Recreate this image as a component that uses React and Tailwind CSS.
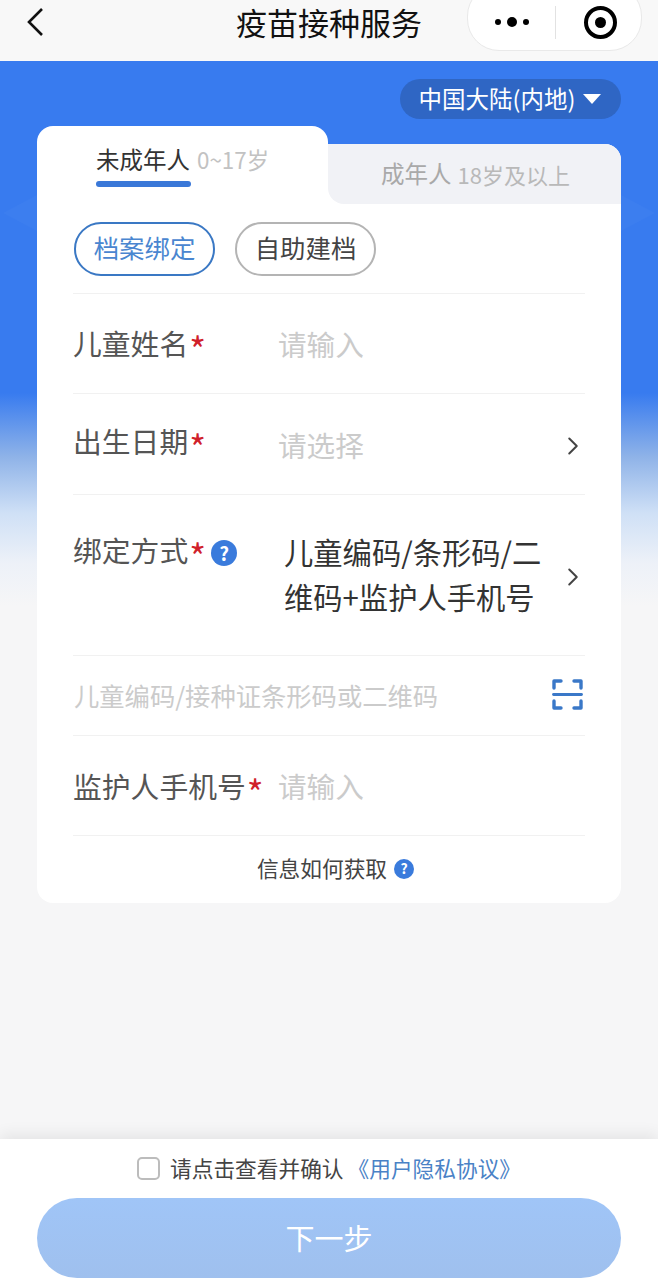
import { ChevronRight } from "lucide-react";

const FONT = "[font-family:'Noto_Sans_CJK_SC','Noto_Sans',sans-serif]";

function Help({ className }) {
    return (
        <span className={`flex items-center justify-center rounded-full bg-[#3a7bdc] font-bold text-white ${className}`}>
            ?
        </span>
    );
}

function Star() {
    return <span className="ml-[1px] h-[20px] text-[36px] leading-[31px] text-[#d0202a]">*</span>;
}

function Row({ label, height, pt, placeholder, holderTop, arrow }) {
    return (
        <div className={`flex items-start border-b border-[#f1f1f1] ${height} ${pt}`}>
            <div className="flex w-[205px] shrink-0 items-center text-[28.8px] leading-[42px] text-[#555]">
                {label}
                <Star />
            </div>
            <div className={`flex-1 text-[28.6px] leading-[42px] text-[#cbcbcb] ${holderTop}`}>{placeholder}</div>
            {arrow && <ChevronRight className="mr-[-3px] mt-[11px] h-[30px] w-[30px] text-[#444]" strokeWidth={1.6} />}
        </div>
    );
}

export default function App() {
    return (
        <div className={`flex h-[1287px] w-[658px] flex-col overflow-hidden bg-[#f6f6f7] ${FONT}`}>
            {/* Nav bar */}
            <header className="relative flex h-[61px] shrink-0 items-center justify-center bg-[#f8f8f8]">
                <svg className="absolute left-[25px] top-[7px] h-[30px] w-[20px]" viewBox="0 0 20 30" fill="none">
                    <path d="M17 2 L4 15 L17 28" stroke="#111" strokeWidth="2.6" />
                </svg>
                <h1 className="mb-[17px] text-[31px] font-normal leading-[44px] text-[#111]">疫苗接种服务</h1>
                <div className="absolute left-[467px] top-[-16px] flex h-[67px] w-[175px] items-center rounded-[32px] border border-[#e9e9e9] bg-white pt-[9px]">
                    <div className="flex w-[87px] items-center justify-center gap-[6px]">
                        <span className="h-[6px] w-[6px] rounded-full bg-black" />
                        <span className="h-[10px] w-[10px] rounded-full bg-black" />
                        <span className="h-[6px] w-[6px] rounded-full bg-black" />
                    </div>
                    <div className="h-[33px] w-px bg-[#e2e2e2]" />
                    <div className="flex flex-1 items-center justify-center pl-[4px]">
                        <div className="flex h-[33px] w-[33px] items-center justify-center rounded-full border-[4px] border-black">
                            <span className="h-[11px] w-[11px] rounded-full bg-black" />
                        </div>
                    </div>
                </div>
            </header>

            {/* Blue backdrop + card */}
            <main className="relative flex-1 bg-[linear-gradient(to_bottom,#387bef_0,#387bef_332px,#8fb3e8_396px,#cfe0f6_452px,#edf1f8_502px,#f6f6f7_545px)] px-[37px] pt-[18px]">
                <svg className="absolute left-0 top-[132px] h-[40px] w-full" viewBox="0 0 658 40">
                    <path d="M3 20 L37 2 V38 Z M655 20 L621 2 V38 Z" fill="#fff" fillOpacity="0.025" />
                </svg>

                <div className="flex justify-end">
                    <div className="flex h-[40px] w-[221px] items-center justify-center gap-[7px] rounded-full bg-[#2f66c4] pb-[1px] text-[23.5px] text-white">
                        中国大陆(内地)
                        <svg className="h-[12px] w-[20px]" viewBox="0 0 20 12">
                            <path d="M1 1 H19 L10 11 Z" fill="#fff" />
                        </svg>
                    </div>
                </div>

                <div className="relative mt-[7px]">
                    <div className="flex h-[78px] items-end">
                        <div className="h-[78px] w-[291px] shrink-0 rounded-t-[16px] bg-white pl-[59px] pt-[15px]">
                            <div className="flex items-baseline gap-[7px] leading-[36px]">
                                <span className="text-[23.5px] text-[#333]">未成年人</span>
                                <span className="text-[22.4px] text-[#c2c2c2]">0~17岁</span>
                            </div>
                            <div className="mt-[4px] h-[6px] w-[95px] rounded-full bg-[#3a78d8]" />
                        </div>
                        <div className="h-[60px] flex-1 rounded-tr-[16px] bg-white">
                            <div className="flex h-full items-center gap-[6px] rounded-tr-[16px] rounded-bl-[16px] bg-[#f1f2f6] pl-[53px]">
                                <span className="text-[23.5px] text-[#a9a9a9]">成年人</span>
                                <span className="text-[22px] text-[#b9b9b9]">18岁及以上</span>
                            </div>
                        </div>
                    </div>

                    <div className="rounded-b-[16px] bg-white px-[36px]">
                        <div className="flex h-[90px] gap-[20px] border-b border-[#f1f1f1] pl-[1px] pt-[18px]">
                            <div className="flex h-[54px] w-[141px] items-center justify-center rounded-full border-2 border-[#3a78c4] pb-[3px] text-[25.4px] text-[#4a86d0]">
                                档案绑定
                            </div>
                            <div className="flex h-[54px] w-[141px] items-center justify-center rounded-full border-2 border-[#b4b4b4] pb-[3px] text-[25.4px] text-[#444]">
                                自助建档
                            </div>
                        </div>

                        <Row label="儿童姓名" height="h-[100px]" pt="pt-[28px]" placeholder="请输入" holderTop="mt-[1px]" />
                        <Row label="出生日期" height="h-[101px]" pt="pt-[26px]" placeholder="请选择" holderTop="mt-[4px]" arrow />

                        <div className="flex h-[161px] items-start border-b border-[#f1f1f1] pt-[34px]">
                            <div className="flex w-[211px] shrink-0 items-center text-[28.8px] leading-[42px] text-[#555]">
                                绑定方式
                                <Star />
                                <Help className="ml-[5px] mt-[6px] h-[26px] w-[26px] text-[19px]" />
                            </div>
                            <div className="w-[272px] shrink-0 text-[29.3px] leading-[45px] text-[#333]">
                                儿童编码/条形码/二维码+监护人手机号
                            </div>
                            <ChevronRight className="mt-[33px] ml-auto mr-[-3px] h-[30px] w-[30px] shrink-0 text-[#444]" strokeWidth={1.6} />
                        </div>

                        <div className="flex h-[80px] items-center justify-between border-b border-[#f1f1f1]">
                            <span className="ml-[1px] text-[25.3px] text-[#cbcbcb]">儿童编码/接种证条形码或二维码</span>
                            <svg className="mb-[2px] mr-[2px] h-[31px] w-[31px]" viewBox="0 0 31 31" fill="none" stroke="#3a78c8" strokeWidth="3.4" strokeLinecap="round" strokeLinejoin="round">
                                <path d="M2 9 V2 H9 M22 2 H29 V9 M2 22 V29 H9 M22 29 H29 V22" />
                                <path d="M1.5 15.5 H29.5" strokeWidth="2.8" />
                            </svg>
                        </div>

                        <Row label="监护人手机号" height="h-[100px]" pt="pt-[29px]" placeholder="请输入" />

                        <div className="flex h-[67px] items-center justify-center gap-[7px] pb-[2px] pl-[13px] text-[21.7px] text-[#444]">
                            信息如何获取
                            <Help className="h-[20px] w-[20px] text-[14px]" />
                        </div>
                    </div>
                </div>
            </main>

            {/* Bottom bar */}
            <footer className="relative h-[148px] shrink-0 bg-white px-[37px] pt-[11px] shadow-[0_-5px_14px_rgba(0,0,0,0.07)]">
                <div className="flex h-[36px] items-center pl-[100px] text-[21.7px] text-[#444]">
                    <span className="mr-[10px] h-[23px] w-[23px] rounded-[5px] border-2 border-[#bcbcbc]" />
                    请点击查看并确认
                    <span className="ml-[4px] text-[#4a82c6]">《用户隐私协议》</span>
                </div>
                <button className="mt-[12px] flex h-[80px] w-full items-center justify-center rounded-full bg-[linear-gradient(to_bottom,#a0c5f7,#9fc0ee)] text-[29px] text-white">
                    下一步
                </button>
            </footer>
        </div>
    );
}
